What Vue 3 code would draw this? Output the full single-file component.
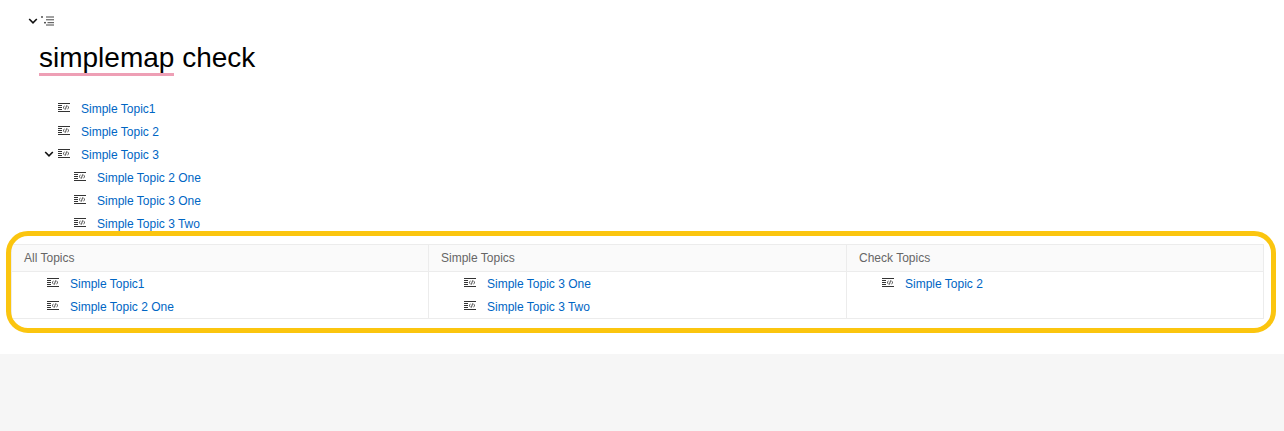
<script setup>
const tree = [
  { label: 'Simple Topic1', level: 0 },
  { label: 'Simple Topic 2', level: 0 },
  { label: 'Simple Topic 3', level: 0, open: true },
  { label: 'Simple Topic 2 One', level: 1 },
  { label: 'Simple Topic 3 One', level: 1 },
  { label: 'Simple Topic 3 Two', level: 1 },
]
const columns = [
  { title: 'All Topics', items: ['Simple Topic1', 'Simple Topic 2 One'] },
  { title: 'Simple Topics', items: ['Simple Topic 3 One', 'Simple Topic 3 Two'] },
  { title: 'Check Topics', items: ['Simple Topic 2'] },
]
</script>

<template>
  <div class="page">
    <main class="content">
      <div class="toolbar">
        <svg class="chev" width="10" height="8" viewBox="0 0 10 8"><path d="M1.2 2 L5 5.8 L8.8 2" fill="none" stroke="#111" stroke-width="1.6" /></svg>
        <svg class="mapicon" width="13" height="10" viewBox="0 0 13 10">
          <path d="M0 1h2M1 .2v1.6M3 6.7h2M4 5.9v1.6M5 1h8M5 3.8h8M6.5 6.7h6.5M5 9h8" fill="none" stroke="#444" stroke-width="1" />
        </svg>
      </div>
      <h1 class="title"><span class="mark">simplemap</span> check</h1>
      <ul class="tree">
        <li v-for="t in tree" :key="t.label" class="row" :class="{ nested: t.level === 1 }">
          <svg v-if="t.open" class="chev small" width="10" height="8" viewBox="0 0 10 8"><path d="M1.2 2 L5 5.8 L8.8 2" fill="none" stroke="#111" stroke-width="1.6" /></svg>
          <svg class="topic" width="12" height="9" viewBox="0 0 12 9">
            <path d="M0 .5h12M0 2.5h4M0 4.5h4M0 6.5h4M0 8.5h12" fill="none" stroke="#333" stroke-width="1" />
            <path d="M6.6 3 L5 4.5 L6.6 6M9.4 3 L11 4.5 L9.4 6M8.6 2.4 L7.4 6.6" fill="none" stroke="#333" stroke-width=".9" />
          </svg>
          <a class="link">{{ t.label }}</a>
        </li>
      </ul>
      <section class="table">
        <div v-for="c in columns" :key="c.title" class="col">
          <div class="head">{{ c.title }}</div>
          <ul class="body">
            <li v-for="i in c.items" :key="i" class="row">
              <svg class="topic" width="12" height="9" viewBox="0 0 12 9">
                <path d="M0 .5h12M0 2.5h4M0 4.5h4M0 6.5h4M0 8.5h12" fill="none" stroke="#333" stroke-width="1" />
                <path d="M6.6 3 L5 4.5 L6.6 6M9.4 3 L11 4.5 L9.4 6M8.6 2.4 L7.4 6.6" fill="none" stroke="#333" stroke-width=".9" />
              </svg>
              <a class="link">{{ i }}</a>
            </li>
          </ul>
        </div>
        <div class="ring"></div>
      </section>
    </main>
    <div class="footer"></div>
  </div>
</template>

<style>
html, body { margin: 0; background: #fff; }
</style>

<style scoped>
.page {
  height: 431px;
  display: flex;
  flex-direction: column;
  font-family: "Liberation Sans", Arial, sans-serif;
  overflow: hidden;
}
.content { height: 354px; box-sizing: border-box; padding: 15px 20px 0 12px; }
.footer { flex: 1; background: #f6f6f6; }
.toolbar { display: flex; align-items: center; gap: 3px; height: 12px; padding-left: 16px; }
.title {
  margin: 8px 0 0 27px;
  font-size: 28px;
  line-height: 45px;
  font-weight: 400;
  color: #000;
  height: 51px;
}
.mark { border-bottom: 3px solid #ee9fb5; padding-bottom: 0; }
ul { list-style: none; margin: 0; padding: 0; }
.tree { padding: 11px 0 0 46px; height: 158px; box-sizing: border-box; }
.row { position: relative; height: 23px; display: flex; align-items: center; font-size: 12px; }
.nested { padding-left: 16px; }
.chev.small { position: absolute; left: -14px; top: 7px; }
.topic { flex: none; margin: -3px 11px 0 0; }
.link { color: #0066c4; white-space: nowrap; }
.table {
  position: relative;
  width: 1253px;
  height: 75px;
  margin-left: -1px;
  box-sizing: border-box;
  display: grid;
  grid-template-columns: 417px 418px 417px;
  border: solid #ececec;
  border-width: 1px 1px 1px 0;
}
.col { border-left: 1px solid #ececec; }
.head {
  height: 27px;
  box-sizing: border-box;
  padding: 6px 12px 0;
  background: #fafafa;
  border-bottom: 1px solid #ececec;
  color: #666;
  font-size: 12px;
  line-height: 15px;
}
.body { padding-left: 35px; }
.ring {
  position: absolute;
  left: -5px;
  top: -14px;
  width: 1270px;
  height: 102px;
  box-sizing: border-box;
  border: 5px solid #fbc50f;
  border-radius: 22px;
  pointer-events: none;
}
</style>
